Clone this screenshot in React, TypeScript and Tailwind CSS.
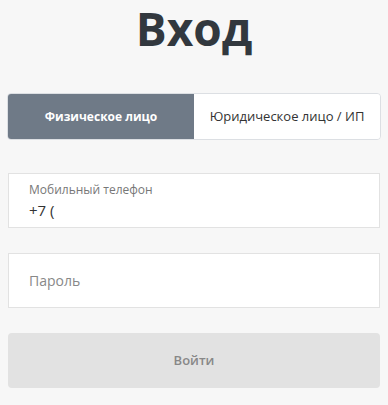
export default function App() {
  return (
    <div className="min-h-[405px] bg-[#f7f7f7] font-['Open_Sans',sans-serif]">
      <h1 className="text-center text-[46px] font-bold leading-[56px] text-[#32383e]">Вход</h1>

      {/* Тип клиента */}
      <div className="mx-[7px] mt-[37px] grid h-[47px] grid-cols-2 overflow-hidden rounded-[4px] border border-[#dcdfe3]">
        <button className="bg-[#6f7a87] text-[12px] font-bold text-white">Физическое лицо</button>
        <button className="bg-white text-[13px] text-[#333]">Юридическое лицо / ИП</button>
      </div>

      <div className="mx-[8px] mt-[33px] flex flex-col gap-[25px]">
        <div className="flex h-[55px] flex-col justify-center border border-[#e2e2e2] bg-white px-[20px]">
          <span className="text-[12px] leading-[16px] text-[#777]">Мобильный телефон</span>
          <span className="mt-[2px] text-[15px] leading-[20px] text-[#333]">+7 (</span>
        </div>

        <div className="flex h-[55px] items-center border border-[#e2e2e2] bg-white px-[20px]">
          <span className="text-[14px] text-[#888]">Пароль</span>
        </div>

        <button className="h-[55px] rounded-[4px] bg-[#e2e2e2] text-[13px] font-semibold text-[#888]">Войти</button>
      </div>
    </div>
  );
}
